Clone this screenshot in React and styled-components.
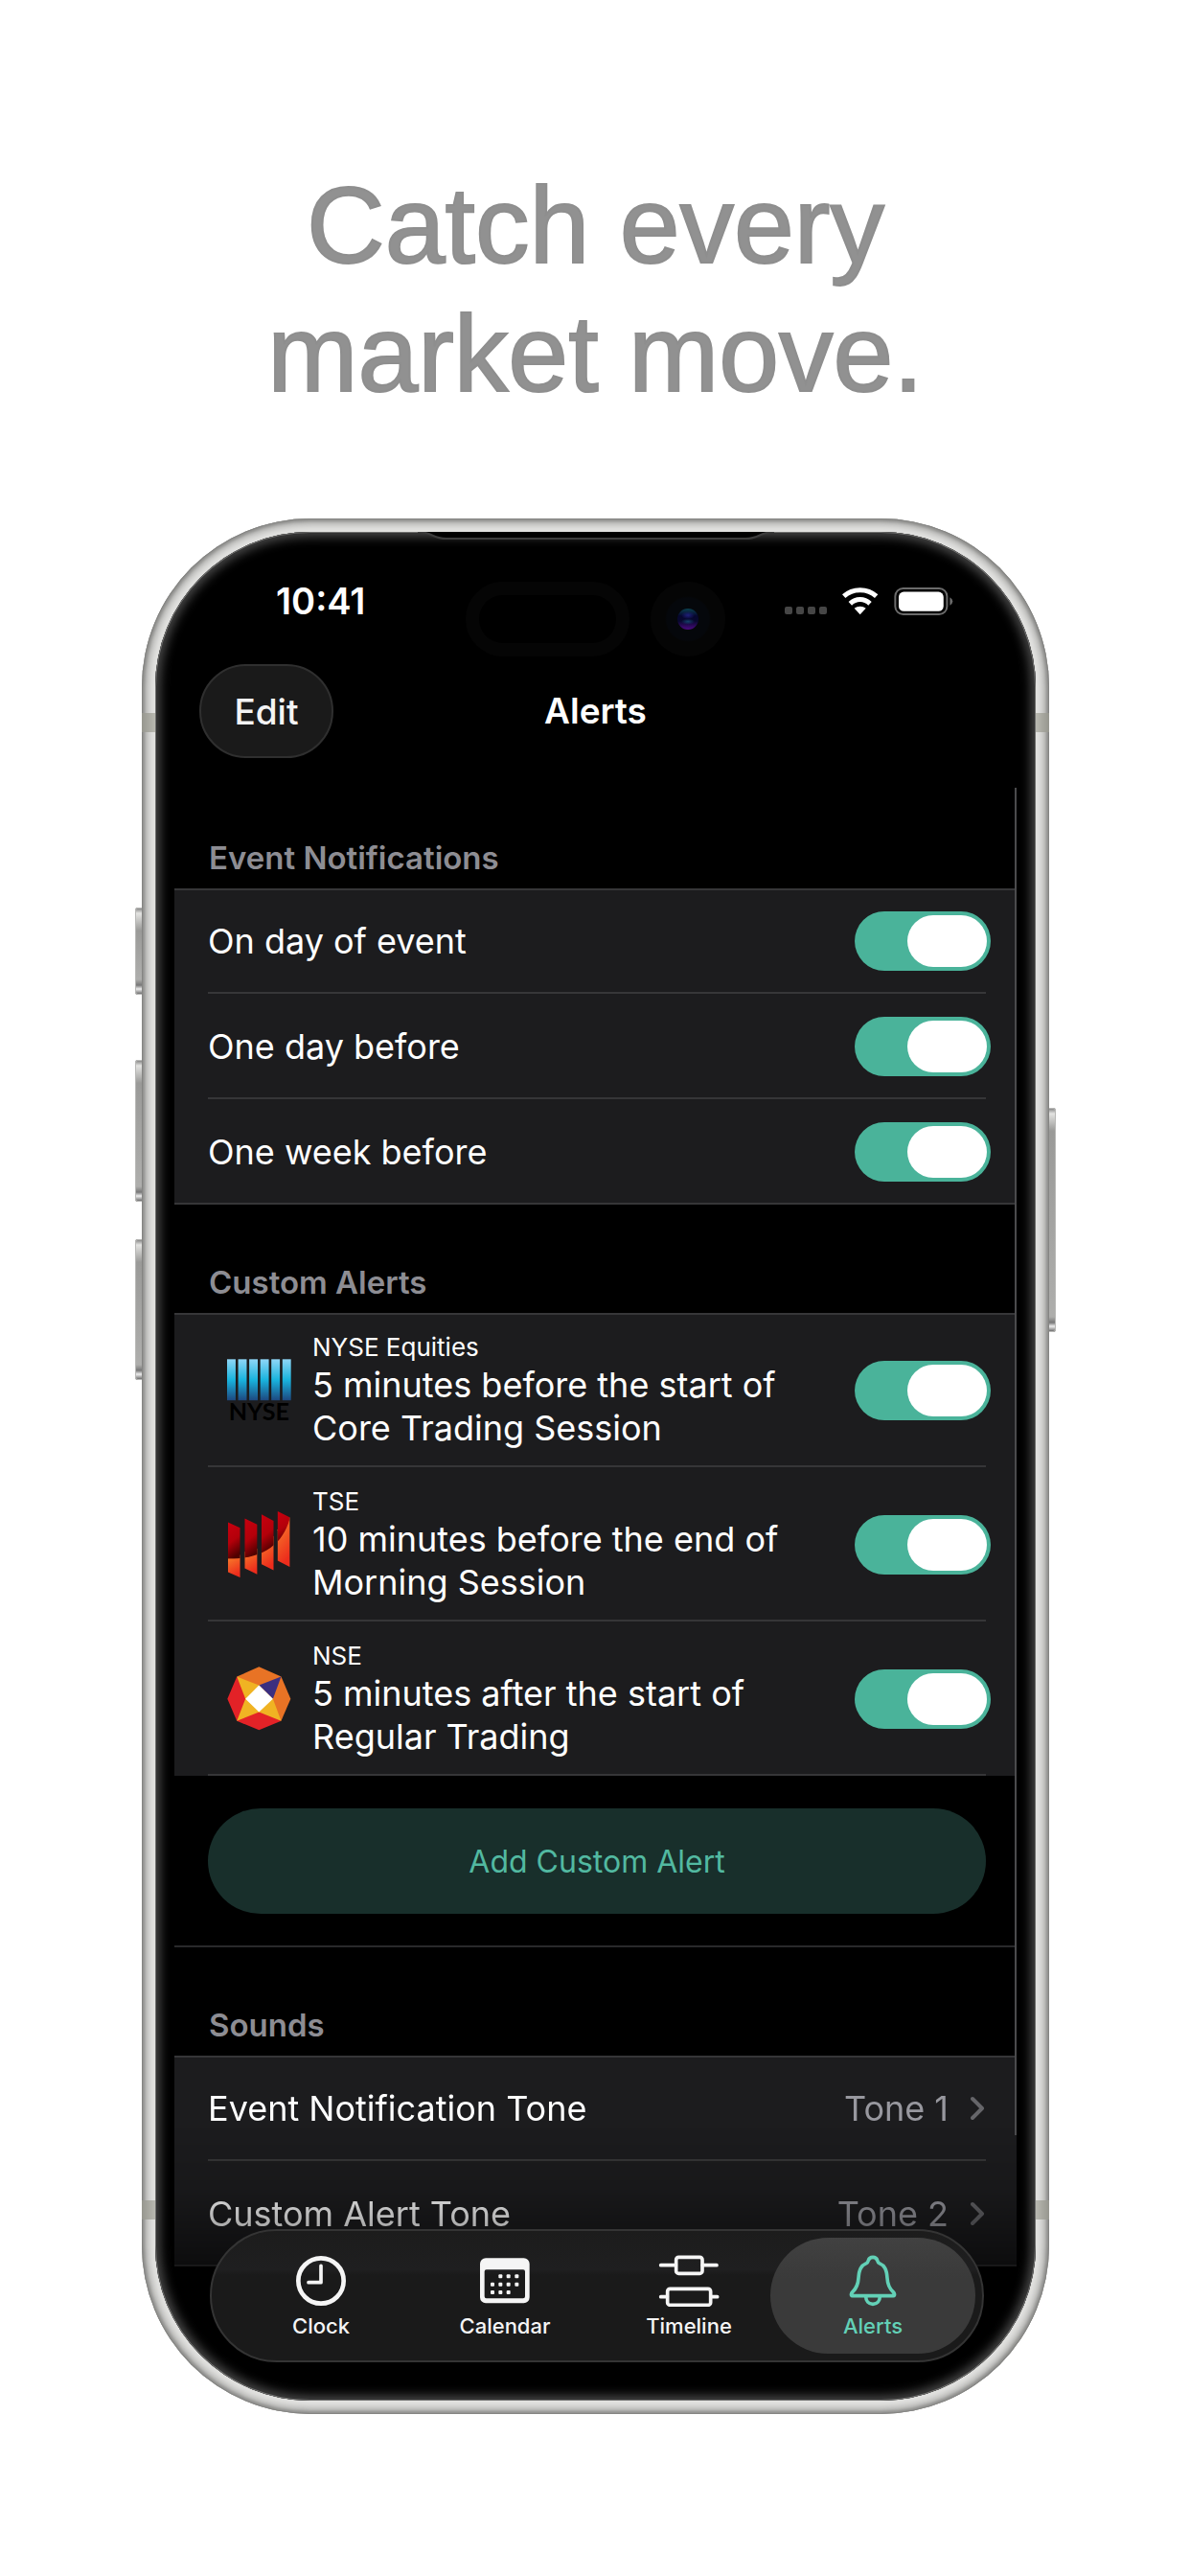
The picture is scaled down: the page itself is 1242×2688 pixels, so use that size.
import React, { useState } from 'react';
import styled, { createGlobalStyle } from 'styled-components';


const NyseLogo = () => (
    <Logo viewBox='51 79 203 195' aria-hidden='true'>
        <defs>
            <linearGradient id='nyseBar' x1='0' y1='0' x2='0' y2='1'>
                <stop offset='0' stopColor='#8fd6f7' />
                <stop offset='0.5' stopColor='#19b4de' />
                <stop offset='1' stopColor='#1d4880' />
            </linearGradient>
        </defs>
        {[51, 86, 121, 156, 191, 226].map(x => (
            <rect key={x} x={x} y='79' width='27' height='130' fill='url(#nyseBar)' />
        ))}
        <text x='152' y='271' textAnchor='middle' fontFamily='Lato, sans-serif' fontWeight='700' fontSize='76' fill='#000'>NYSE</text>
    </Logo>
)

const TseLogo = () => (
    <Logo viewBox='51 560 203 213' aria-hidden='true'>
        <defs>
            <linearGradient id='tseDark' x1='0' y1='0' x2='0.25' y2='1'>
                <stop offset='0' stopColor='#c8000f' />
                <stop offset='0.55' stopColor='#b3000a' />
                <stop offset='1' stopColor='#4e0000' />
            </linearGradient>
            <linearGradient id='tseLight' x1='0' y1='0' x2='0.3' y2='1'>
                <stop offset='0' stopColor='#f9842c' />
                <stop offset='1' stopColor='#ec2c1c' />
            </linearGradient>
            <clipPath id='tseCurve'>
                <path d='M40 540 H256 C250 640 190 714 54 712 H40 Z' />
            </clipPath>
        </defs>
        <g fill='url(#tseLight)'>
            <path d='M54 700 L92 700 V771 L54 754 Z' />
            <path d='M107 690 L146 680 V761 L107 742 Z' />
            <path d='M160 670 L198 640 V748 L160 729 Z' />
            <path d='M211 620 L249 581 V738 L211 718 Z' />
        </g>
        <g fill='url(#tseDark)' clipPath='url(#tseCurve)'>
            <path d='M54 597 L92 614 V716 H54 Z' />
            <path d='M107 585 L146 604 V716 H107 Z' />
            <path d='M160 572 L198 592 V700 H160 Z' />
            <path d='M211 562 L249 581 V670 H211 Z' />
        </g>
    </Logo>
)

const NseLogo = () => (
    <Logo viewBox='51 1050 203 201' aria-hidden='true'>
        <path fill='#e87325' d='M82 1081 L152 1050 L222 1081 L252 1151 L222 1221 L152 1151 Z' />
        <path fill='#e32227' d='M82 1081 L52 1151 L82 1221 L152 1250 L222 1221 L152 1151 Z' />
        <path fill='#f0b323' d='M82 1081 L152 1108 L196 1151 L222 1221 L152 1193 L82 1221 L109 1151 Z' />
        <path fill='#3b2f80' d='M222 1081 L152 1108 L196 1151 Z' />
        <path fill='#fff' d='M152 1108 L196 1151 L152 1193 L109 1151 Z' />
    </Logo>
)

const ClockIcon = () => (
    <TabIcon viewBox='533 278 162 162' fill='none' stroke='currentColor'>
        <circle cx='614' cy='359' r='71' strokeWidth='14' />
        <path d='M614 312 V364 H575' strokeWidth='11' strokeLinecap='round' strokeLinejoin='round' />
    </TabIcon>
)

const calendarDots = [
    [1176, 345], [1201, 345], [1227, 345],
    [1151, 370], [1176, 370], [1201, 370], [1227, 370],
    [1151, 395], [1176, 395], [1201, 395],
];

const CalendarIcon = () => (
    <TabIcon viewBox='1109 278 162 162' fill='currentColor'>
        <path fillRule='evenodd' d='M1130 288 H1249 A18 18 0 0 1 1267 306 V411 A18 18 0 0 1 1249 429 H1130 A18 18 0 0 1 1112 411 V306 A18 18 0 0 1 1130 288 Z M1132 324 A6 6 0 0 0 1126 330 V408 A6 6 0 0 0 1132 414 H1247 A6 6 0 0 0 1253 408 V330 A6 6 0 0 0 1247 324 Z' />
        {calendarDots.map(([x, y]) => (
            <rect key={`${x}-${y}`} x={x - 6} y={y - 6} width='12' height='12' rx='3' />
        ))}
    </TabIcon>
)

const TimelineIcon = () => (
    <TabIcon $wide viewBox='201 278 192 162' fill='none' stroke='currentColor' strokeWidth='11' strokeLinecap='round'>
        <rect x='257' y='285' width='82' height='51' rx='8' />
        <path d='M209 310 H256 M340 310 H384' />
        <rect x='230' y='384' width='135' height='51' rx='8' />
        <path d='M209 409 H229 M366 409 H386' />
    </TabIcon>
)

const BellIcon = () => (
    <TabIcon viewBox='788 278 162 162' fill='none' stroke='currentColor' strokeWidth='11' strokeLinejoin='round'>
        <path d='M805 406 H933 C939 406 937 398 932 393 C918 380 915 368 914 350 C912 324 906 311 889 304 C885 302 884 299 883 295 C881 288 876 285 869 285 C862 285 857 288 855 295 C854 299 853 302 849 304 C832 311 826 324 824 350 C823 368 820 380 806 393 C801 398 799 406 805 406 Z' />
        <path d='M847 408 C847 422 856 432 869 432 C882 432 891 422 891 408' />
    </TabIcon>
)

const events = ['On day of event', 'One day before', 'One week before'];

const alerts = [
    { market: 'NYSE Equities', text: '5 minutes before the start of\nCore Trading Session', Icon: NyseLogo },
    { market: 'TSE', text: '10 minutes before the end of\nMorning Session', Icon: TseLogo },
    { market: 'NSE', text: '5 minutes after the start of\nRegular Trading', Icon: NseLogo },
];

const sounds = [
    { name: 'Event Notification Tone', tone: 'Tone 1' },
    { name: 'Custom Alert Tone', tone: 'Tone 2' },
];

const tabs = [
    { name: 'Clock', Icon: ClockIcon },
    { name: 'Calendar', Icon: CalendarIcon },
    { name: 'Timeline', Icon: TimelineIcon },
    { name: 'Alerts', Icon: BellIcon },
];

const App = () => {
    const [tab, setTab] = useState('Alerts');

    return (
        <Page>
            <GlobalStyle />
            <Headline>Catch every<br />market move.</Headline>
            <Phone>
                <SideButton $side='left' $top={406} $height={91} />
                <SideButton $side='left' $top={565} $height={148} />
                <SideButton $side='left' $top={752} $height={147} />
                <SideButton $side='right' $top={615} $height={234} />
                <Frame>
                    <Antenna $side='left' $top={203} />
                    <Antenna $side='right' $top={203} />
                    <Antenna $side='left' $top={1755} />
                    <Antenna $side='right' $top={1755} />
                    <Screen>
                        <Earpiece viewBox='0 0 372 10' preserveAspectRatio='none' aria-hidden='true'>
                            <path d='M0 0 H372 C356 0 358 7 342 7 H30 C14 7 16 0 0 0 Z' fill='#000' />
                            <path d='M0 0 C16 0 14 7 30 7 H342 C358 7 356 0 372 0' fill='none' stroke='#3c3c3c' strokeWidth='2' />
                        </Earpiece>
                        <Sensors>
                            <Pill />
                            <Camera><Lens /></Camera>
                        </Sensors>
                        <StatusBar>
                            <Time>10:41</Time>
                            <StatusIcons>
                                <Signal><i /><i /><i /><i /></Signal>
                                <WifiIcon viewBox='774 278 114 86' fill='none' stroke='#fff' strokeWidth='15'>
                                    <path d='M779 305 C807 279 853 279 881 305' />
                                    <path d='M799 328 C817 311 843 311 861 328' />
                                    <path d='M812 343 C822 335 838 335 848 343 L830 362 Z' fill='#fff' stroke='none' />
                                </WifiIcon>
                                <BatteryIcon viewBox='936 276 186 88'>
                                    <rect x='939' y='279' width='164' height='82' rx='25' fill='none' stroke='#6b6b6b' strokeWidth='6' />
                                    <rect x='950' y='290' width='142' height='61' rx='16' fill='#fff' />
                                    <path d='M1112 307 Q1121 312 1121 320 Q1121 328 1112 333 Z' fill='#6b6b6b' />
                                </BatteryIcon>
                            </StatusIcons>
                        </StatusBar>
                        <NavBar>
                            <EditButton type='button'>Edit</EditButton>
                            <Title>Alerts</Title>
                        </NavBar>
                        <Content>
                            <SectionTitle>Event Notifications</SectionTitle>
                            <List $closed>
                                {events.map(name => (
                                    <Row as='label' key={name}>
                                        <RowText>{name}</RowText>
                                        <Switch type='checkbox' role='switch' defaultChecked />
                                    </Row>
                                ))}
                            </List>
                            <SectionTitle>Custom Alerts</SectionTitle>
                            <List>
                                {alerts.map(({ market, text, Icon }) => (
                                    <AlertRow as='label' key={market}>
                                        <Icon />
                                        <AlertText>
                                            <Market>{market}</Market>
                                            <RowText>{text}</RowText>
                                        </AlertText>
                                        <Switch type='checkbox' role='switch' defaultChecked />
                                    </AlertRow>
                                ))}
                            </List>
                            <AddArea>
                                <AddButton type='button'>Add Custom Alert</AddButton>
                            </AddArea>
                            <SectionTitle>Sounds</SectionTitle>
                            <List $closed $faded>
                                {sounds.map(({ name, tone }) => (
                                    <ToneRow as='button' type='button' key={name}>
                                        <RowText>{name}</RowText>
                                        <Tone>{tone}</Tone>
                                        <Chevron viewBox='0 0 15 26' fill='none' stroke='#656569' strokeWidth='4' strokeLinecap='round' strokeLinejoin='round'>
                                            <path d='M2 3 L12 13 L2 23' />
                                        </Chevron>
                                    </ToneRow>
                                ))}
                            </List>
                            <ScrollBar />
                        </Content>
                        <TabBar>
                            {tabs.map(({ name, Icon }) => (
                                <Tab type='button' key={name} $active={tab === name} onClick={() => setTab(name)}>
                                    <Icon />
                                    {name}
                                </Tab>
                            ))}
                        </TabBar>
                    </Screen>
                </Frame>
            </Phone>
        </Page>
    )
}
export default App;

const GlobalStyle = createGlobalStyle`
    * {
        box-sizing: border-box;
    }
    body {
        margin: 0;
        background: #fff;
        font-family: Inter, "Liberation Sans", sans-serif;
    }
    button {
        font-family: inherit;
        border: none;
        padding: 0;
        cursor: pointer;
    }
`

const Page = styled.div`
    padding: 168px 147px 169px 148px;
`

const Headline = styled.h1`
    margin: 0 0 105px;
    font-family: "Liberation Sans", Arial, sans-serif;
    font-size: 113px;
    line-height: 134px;
    font-weight: 400;
    text-align: center;
    color: #919191;
    -webkit-text-stroke: 2px #8e8e8e;
`

const Phone = styled.div`
    position: relative;
`

const SideButton = styled.span`
    position: absolute;
    top: ${p => p.$top}px;
    ${p => p.$side}: -7px;
    width: 10px;
    height: ${p => p.$height}px;
    border-radius: 3px;
    background: linear-gradient(to bottom, #777 0, #e4e4e2 6px, #9a9a98 24px, #aeaeac calc(100% - 16px), #777 calc(100% - 10px), #eee calc(100% - 6px), #555 100%);
    box-shadow: inset 0 0 0 1px #b9b9b7;
`

const Frame = styled.div`
    position: relative;
    padding: 14px;
    border-radius: 176px;
    background: #e2e2e0;
    box-shadow:
        inset 0 0 0 1px #858583,
        inset 0 0 3px 3px #8f8f8d,
        inset 0 0 6px 7px #b4b4b2;
`

const Antenna = styled.span`
    position: absolute;
    top: ${p => p.$top}px;
    ${p => p.$side}: 0;
    width: 14px;
    height: 20px;
    background: linear-gradient(to ${p => p.$side}, #b9b9b1, #96968e);
`

const Screen = styled.div`
    position: relative;
    padding: 50px 20px 40px;
    border-radius: 162px;
    background: #000;
    box-shadow:
        inset 0 0 0 1px #6f6f6e,
        inset 0 0 0 2px #333,
        inset 0 0 11px 5px #4a4a4a;
`

const Earpiece = styled.svg`
    position: absolute;
    top: 0;
    left: 50%;
    width: 372px;
    height: 10px;
    transform: translateX(-50%);
`

const Sensors = styled.div`
    position: absolute;
    top: 52px;
    left: 0;
    right: 0;
    display: flex;
    justify-content: center;
    gap: 22px;
`

const Pill = styled.span`
    width: 171px;
    height: 78px;
    border: 14px solid #050505;
    border-radius: 39px;
`

const Camera = styled.span`
    width: 78px;
    height: 78px;
    border-radius: 50%;
    display: flex;
    align-items: center;
    justify-content: center;
    background: radial-gradient(circle, #05070b 0 22px, #050505 24px);
`

const Lens = styled.span`
    width: 22px;
    height: 22px;
    border-radius: 50%;
    background:
        radial-gradient(ellipse 7px 4px at 50% 32%, #1f1f7a, transparent),
        radial-gradient(ellipse 7px 3px at 50% 62%, #15406a, transparent),
        linear-gradient(#0b4150, #06062e 35%, #08082e 60%, #4b0a80);
`

const StatusBar = styled.div`
    position: relative;
    display: flex;
    align-items: center;
    justify-content: space-between;
    height: 44px;
    margin-bottom: 44px;
    padding: 0 66px 0 106px;
`

const Time = styled.span`
    font-size: 38px;
    line-height: 44px;
    font-weight: 600;
    color: #fff;
`

const StatusIcons = styled.div`
    display: flex;
    align-items: center;
    gap: 16px;
`

const Signal = styled.span`
    display: flex;
    gap: 4px;
    padding-top: 20px;

    i {
        width: 8px;
        height: 8px;
        border-radius: 2px;
        background: #464646;
    }
`

const WifiIcon = styled.svg`
    width: 38px;
    height: 29px;
`

const BatteryIcon = styled.svg`
    width: 62px;
    height: 29px;
`

const NavBar = styled.header`
    display: grid;
    grid-template-columns: 1fr auto 1fr;
    align-items: center;
    padding: 0 26px;
`

const EditButton = styled.button`
    justify-self: start;
    width: 140px;
    height: 98px;
    border: 2px solid #2f2f2f;
    border-radius: 49px;
    background: #1a1a1a;
    color: #f4f4f4;
    font-size: 37px;
    font-weight: 500;
`

const Title = styled.h2`
    margin: 0;
    font-size: 37px;
    line-height: 44px;
    font-weight: 600;
    color: #fff;
`

const Content = styled.main`
    position: relative;
    padding-top: 23px;
`

const SectionTitle = styled.h3`
    margin: 0;
    padding: 61px 36px 12px;
    font-size: 33px;
    line-height: 40px;
    font-weight: 600;
    color: #8d8d93;
`

const List = styled.div`
    background: #1c1c1e;
    box-shadow: inset 0 2px #363638${p => p.$closed && ', inset 0 -2px #363638'};
    ${p => p.$faded && 'mask-image: linear-gradient(#000 30%, rgba(0, 0, 0, 0.85) 65%, rgba(0, 0, 0, 0.45));'}

    > :last-child {
        ${p => p.$closed && 'border-bottom-color: transparent;'}
    }
`

const Row = styled.div`
    display: flex;
    align-items: center;
    height: 110px;
    margin: 0 32px 0 35px;
    padding-top: 2px;
    border-bottom: 2px solid #363638;
`

const AlertRow = styled(Row)`
    height: 161px;
    padding-left: 20px;
`

const ToneRow = styled(Row)`
    width: calc(100% - 67px);
    border-width: 0 0 2px;
    border-style: solid;
    border-color: #363638;
    background: none;
    text-align: left;
`

const RowText = styled.span`
    flex: 1;
    font-size: 36px;
    line-height: 45px;
    color: #fff;
    white-space: pre-line;
`

const AlertText = styled.span`
    flex: 1;
    display: flex;
    flex-direction: column;
    margin-left: 22px;
`

const Market = styled.span`
    font-size: 26px;
    line-height: 34px;
    color: #fff;
`

const Logo = styled.svg`
    width: 67px;
    height: 71px;
`

const Switch = styled.input`
    appearance: none;
    flex: none;
    width: 142px;
    height: 62px;
    margin: 0 -5px 0 0;
    padding: 4px;
    border-radius: 31px;
    background: #39393d;
    cursor: pointer;

    &::before {
        content: '';
        display: block;
        width: 83px;
        height: 54px;
        border-radius: 27px;
        background: #fff;
    }
    &:checked {
        background: #4ab39a;
    }
    &:checked::before {
        margin-left: auto;
    }
`

const AddArea = styled.div`
    padding: 34px 32px 33px 35px;
    border-bottom: 2px solid #29292b;
`

const AddButton = styled.button`
    width: 100%;
    height: 110px;
    border-radius: 55px;
    background: #182f2b;
    color: #52b9a1;
    font-size: 32px;
`

const Tone = styled.span`
    font-size: 36px;
    line-height: 45px;
    color: #98989f;
`

const Chevron = styled.svg`
    width: 15px;
    height: 26px;
    margin: 0 1px 0 23px;
`

const ScrollBar = styled.span`
    position: absolute;
    top: 31px;
    right: 0;
    bottom: 137px;
    width: 2px;
    background: #4b4b4d;
`

const TabBar = styled.nav`
    position: relative;
    display: grid;
    grid-template-columns: repeat(4, 1fr);
    margin: -39px 34px 0 37px;
    padding: 7px 18px;
    border: 2px solid #343434;
    border-radius: 70px;
    background: linear-gradient(#1c1c1c, #1f1f20 30%, #1a1a1a 34%);
`

const Tab = styled.button`
    display: flex;
    flex-direction: column;
    align-items: center;
    gap: 6px;
    margin: 0 -11px;
    padding: 18px 0 15px;
    border-radius: 61px;
    background: ${p => p.$active ? 'linear-gradient(#414141, #3a3a3a 35%)' : 'none'};
    color: ${p => p.$active ? '#63d1b7' : '#f5f5f5'};
    font-size: 22px;
    line-height: 28px;
    font-weight: 500;
`

const TabIcon = styled.svg`
    width: ${p => p.$wide ? 64 : 54}px;
    height: 54px;
`
